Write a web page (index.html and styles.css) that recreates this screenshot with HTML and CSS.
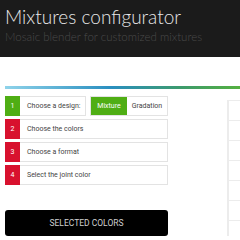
FILE: index.html
```html
<!DOCTYPE html>
<html lang="en">
<head>
    <meta charset="UTF-8">
    <meta name="viewport" content="width=device-width, initial-scale=1.0">
    <title>Mixtures configurator</title>
    <link rel="stylesheet" href="styles.css">
</head>
<body>
    <header class="top">
        <h1>Mixtures configurator</h1>
        <p>Mosaic blender for customized mixtures</p>
    </header>

    <div class="bar"></div>

    <div class="main">
        <div class="steps">
            <div class="step">
                <span class="num done">1</span>
                <span class="label short">Choose a design:</span>
                <div class="choice">
                    <span class="opt active">Mixture</span>
                    <span class="opt">Gradation</span>
                </div>
            </div>
            <div class="step">
                <span class="num">2</span>
                <span class="label">Choose the colors</span>
            </div>
            <div class="step">
                <span class="num">3</span>
                <span class="label">Choose a format</span>
            </div>
            <div class="step">
                <span class="num">4</span>
                <span class="label">Select the joint color</span>
            </div>
            <button class="selected">SELECTED COLORS</button>
        </div>
        <div class="panel">
            <div class="line"></div>
            <div class="line"></div>
            <div class="line"></div>
            <div class="line"></div>
            <div class="line"></div>
            <div class="line"></div>
        </div>
    </div>
</body>
</html>
```

FILE: styles.css
```css
/* General */
body {
    margin: 0;
    width: 240px;
    height: 240px;
    overflow: hidden;
    background: #fff;
    font-family: Roboto, 'Liberation Sans', sans-serif;
}

/* Header */
.top {
    background: #1b1b1b;
    height: 57px;
    padding: 5px 5px 0;
    box-sizing: border-box;
}
.top h1 {
    margin: 0;
    font-family: Lato, sans-serif;
    font-weight: 300;
    font-size: 19px;
    line-height: 23px;
    color: #e8e8e8;
}
.top p {
    margin: 2px 0 0;
    font-family: Lato, sans-serif;
    font-weight: 300;
    font-size: 11.5px;
    color: #4a4a4a;
}

.bar {
    margin: 29px 0 0 5px;
    height: 3px;
    background: linear-gradient(90deg, #8fd3ea, #2a8fc0 45%, #3d9b6c 75%, #55b040);
}

/* Steps */
.main {
    display: flex;
    padding: 7px 0 0 5px;
}
.steps {
    width: 163px;
    display: flex;
    flex-direction: column;
    gap: 3px;
}
.step {
    display: flex;
    height: 20px;
}
.num {
    width: 15px;
    flex: 0 0 15px;
    background: #d8112e;
    color: #fff;
    font-size: 7px;
    display: flex;
    align-items: center;
    justify-content: center;
}
.num.done {
    background: #4fae14;
}
.label {
    flex: 1;
    border: 1px solid #e3e3e3;
    border-left: none;
    display: flex;
    align-items: center;
    padding-left: 7px;
    font-size: 7px;
    color: #444;
}
.label.short {
    flex: 0 0 58px;
}
.choice {
    display: flex;
    margin-left: 4px;
    flex: 1;
    border: 1px solid #e3e3e3;
}
.opt {
    display: flex;
    align-items: center;
    justify-content: center;
    font-size: 7px;
    color: #444;
    flex: 1;
}
.opt.active {
    background: #4fae14;
    color: #fff;
    flex: 0 0 36px;
}

.selected {
    margin-top: 22px;
    height: 26px;
    background: #000;
    color: #cfcfcf;
    border: none;
    border-radius: 3px;
    font-family: Roboto, sans-serif;
    font-size: 8.5px;
    padding: 0;
}

/* Right panel */
.panel {
    margin: 4px 0 0 59px;
    flex: 1;
    border-left: 2px solid #ececec;
    border-top: 1px solid #ececec;
}
.line {
    height: 19px;
    border-bottom: 1px solid #ececec;
}
```
